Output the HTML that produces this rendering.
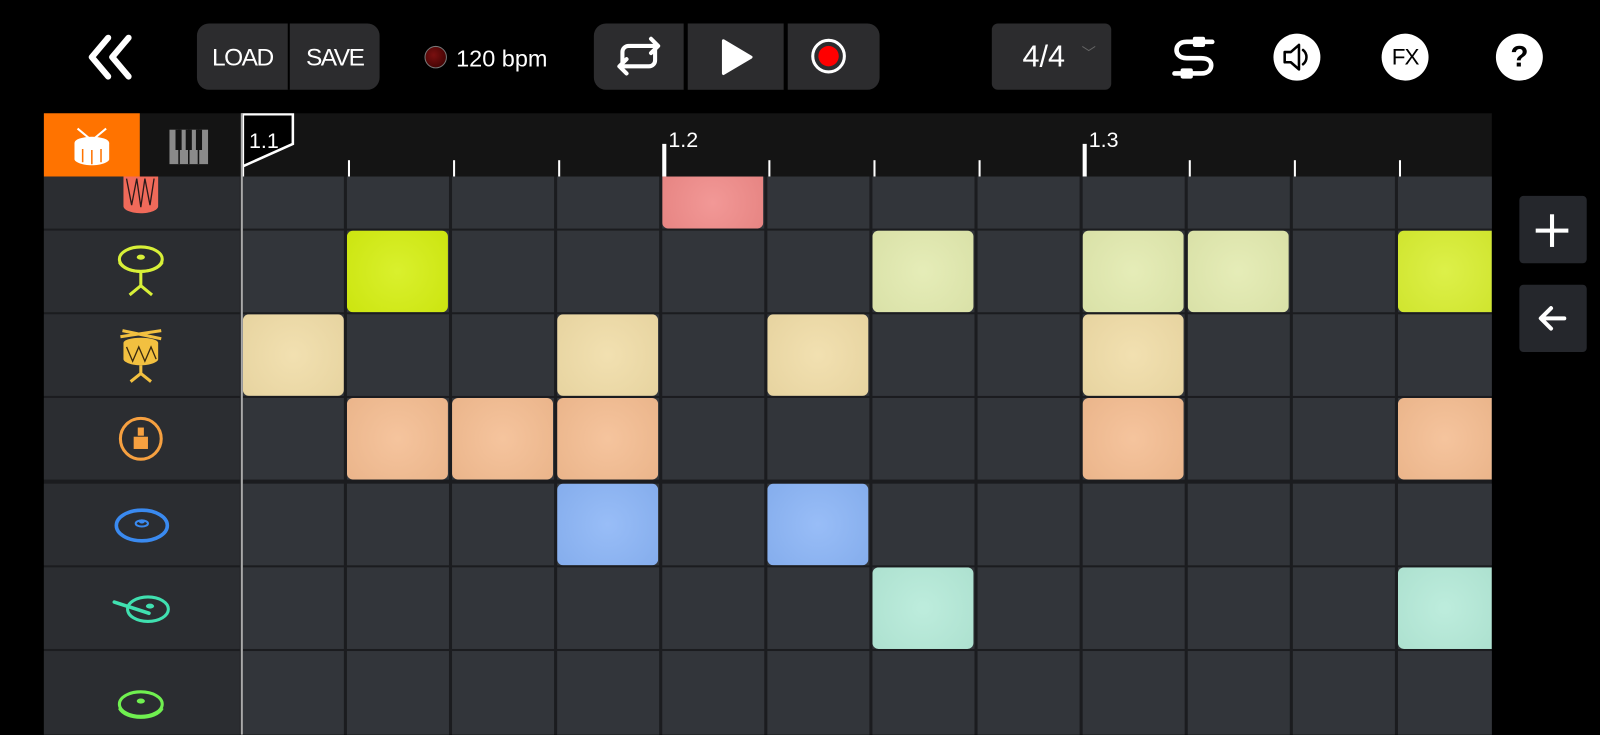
<!DOCTYPE html><html><head><style>
body{margin:0;width:1600px;height:720px;background:#000;position:relative;overflow:hidden;font-family:"Liberation Sans",sans-serif;color:#fff}
#w{position:absolute;left:0;top:0;width:1568px;height:706px;transform:scale(1.0204);transform-origin:0 0}
.a{position:absolute}
.btn{background:#2c2c2e;position:absolute}
.cell{position:absolute;width:99px;border-radius:6px}
</style></head><body><div id="w">
<svg class="a" style="left:84px;top:33px" width="48" height="46" viewBox="0 0 48 46"><path d="M22 4L6 23L22 42M42 4L26 23L42 42" fill="none" stroke="#fff" stroke-width="6" stroke-linecap="round" stroke-linejoin="round"/></svg>
<div class="btn" style="left:193px;top:23px;width:179px;height:65px;border-radius:12px"></div>
<div class="a" style="left:282px;top:23px;width:2px;height:65px;background:#000"></div>
<div class="a" style="left:193px;top:43px;width:89px;text-align:center;font-size:24px;letter-spacing:-1.5px">LOAD</div>
<div class="a" style="left:284px;top:43px;width:88px;text-align:center;font-size:24px;letter-spacing:-1.5px">SAVE</div>
<div class="a" style="left:416px;top:45px;width:22px;height:22px;border-radius:50%;background:radial-gradient(circle at 40% 40%,#7a1010,#300);border:1px solid #777;box-sizing:border-box"></div>
<div class="a" style="left:447px;top:44px;font-size:23px">120 bpm</div>
<div class="btn" style="left:582px;top:23px;width:88px;height:65px;border-radius:12px 0 0 12px"></div>
<div class="btn" style="left:674px;top:23px;width:94px;height:65px"></div>
<div class="btn" style="left:772px;top:23px;width:90px;height:65px;border-radius:0 12px 12px 0"></div>
<svg class="a" style="left:600px;top:35px" width="52" height="40" viewBox="0 0 52 40"><path d="M10 26V16a6 6 0 0 1 6-6h28M38 3l7 7-7 7M42 14v10a6 6 0 0 1-6 6H8M14 37l-7-7 7-7" fill="none" stroke="#fff" stroke-width="4" stroke-linecap="round" stroke-linejoin="round"/></svg>
<svg class="a" style="left:706px;top:38px" width="32" height="36"><path d="M3 2L30 18L3 34Z" fill="#fff" stroke="#fff" stroke-width="3" stroke-linejoin="round"/></svg>
<div class="a" style="left:795px;top:38px;width:34px;height:34px;border:3px solid #fff;border-radius:50%;box-sizing:border-box"></div>
<div class="a" style="left:802px;top:45px;width:20px;height:20px;background:#f00;border-radius:50%"></div>
<div class="btn" style="left:972px;top:23px;width:117px;height:65px;border-radius:6px"></div>
<div class="a" style="left:1002px;top:39px;font-size:30px">4/4</div>
<div class="a" style="left:1060px;top:42px;font-size:14px;color:#666">﹀</div>
<svg class="a" style="left:1145px;top:32px" width="50" height="48" viewBox="0 0 50 48"><path d="M43 9H18C10 9 8 14 8 17s2 8 10 8h14c8 0 10 4 10 7s-2 8-10 8H6" fill="none" stroke="#fff" stroke-width="4.5" stroke-linecap="round"/><rect x="24" y="4" width="12" height="10" rx="2" fill="#fff"/><rect x="12" y="35" width="12" height="10" rx="2" fill="#fff"/></svg>
<div class="a" style="left:1248px;top:33px;width:46px;height:46px;border-radius:50%;background:#fff"></div>
<svg class="a" style="left:1248px;top:33px" width="46" height="46"><path d="M11 18h6l8-7v24l-8-7h-6Z" fill="none" stroke="#000" stroke-width="2.5" stroke-linejoin="round"/><path d="M29 16a9 9 0 0 1 0 14" fill="none" stroke="#000" stroke-width="2.5" stroke-linecap="round"/></svg>
<div class="a" style="left:1354px;top:33px;width:46px;height:46px;border-radius:50%;background:#fff;color:#000;font-size:22px;text-align:center;line-height:46px;letter-spacing:-1px">FX</div>
<div class="a" style="left:1466px;top:33px;width:46px;height:46px;border-radius:50%;background:#fff;color:#000;font-size:29px;font-weight:bold;text-align:center;line-height:46px">?</div>

<div class="a" style="left:43px;top:111px;width:1419px;height:62px;background:#141414"></div>
<div class="a" style="left:43px;top:111px;width:94px;height:62px;background:#ff7300"></div>
<svg class="a" style="left:68px;top:122px" width="44" height="42"><path d="M8 4L20 14M36 4L24 14" stroke="#fff" stroke-width="2"/><ellipse cx="22" cy="18" rx="17" ry="6" fill="#fff"/><path d="M5 18v16c0 3 8 6 17 6s17-3 17-6V18" fill="#fff"/><path d="M13 24v13M22 25v14M31 24v13" stroke="#ff7300" stroke-width="1.5"/></svg>
<svg class="a" style="left:166px;top:127px" width="38" height="34"><rect x="0" y="0" width="38" height="34" fill="#8a8a8a"/><path d="M9.5 0v34M19 0v34M28.5 0v34" stroke="#141414" stroke-width="1.5"/><rect x="6" y="0" width="6" height="20" fill="#141414"/><rect x="16" y="0" width="6" height="20" fill="#141414"/><rect x="26" y="0" width="6" height="20" fill="#141414"/></svg>
<svg class="a" style="left:236px;top:111px" width="54" height="62"><path d="M2 62V1H51V30L2 52" fill="#000" stroke="#fff" stroke-width="2.5"/></svg>
<div class="a" style="left:244px;top:127px;font-size:21px">1.1</div>
<div class="a" style="left:655px;top:126px;font-size:21px">1.2</div>
<div class="a" style="left:1067px;top:126px;font-size:21px">1.3</div>
<div class="a" style="left:649px;top:141px;width:4px;height:32px;background:#fff"></div>
<div class="a" style="left:1061px;top:141px;width:4px;height:32px;background:#fff"></div>
<div id="ticks"></div>

<div class="a" style="left:43px;top:173px;width:1419px;height:547px;background:#1b1c1f"></div>
<div id="grid"></div>
<div class="a" style="left:236px;top:111px;width:2px;height:609px;background:#aaa"></div>

<svg class="a" style="left:118px;top:173px" width="42" height="40"><path d="M3 0v29c0 4 8 7 17 7s17-3 17-7V0Z" fill="#f06a5a"/><path d="M6 2l5 26 5-26 4 28 4-28 5 26 4-26" fill="none" stroke="#2a1a1a" stroke-width="1.3"/></svg>
<svg class="a" style="left:114px;top:240px" width="50" height="56"><ellipse cx="24" cy="14" rx="21" ry="12" fill="none" stroke="#d8f038" stroke-width="3"/><path d="M3 17c3 6 12 9 21 9s18-3 21-9" fill="none" stroke="#d8f038" stroke-width="3"/><ellipse cx="24" cy="12" rx="4" ry="2.5" fill="#d8f038"/><path d="M24 26v14M24 40l-11 9M24 40l11 9" stroke="#d8f038" stroke-width="3"/></svg>
<svg class="a" style="left:114px;top:320px" width="50" height="58"><path d="M4 10l40 -6M6 4l38 8" stroke="#f2c040" stroke-width="3"/><ellipse cx="24" cy="16" rx="17" ry="5" fill="#f2c040"/><path d="M7 16v16c0 3 8 6 17 6s17-3 17-6V16" fill="#f2c040"/><path d="M10 20l6 14 6-14 6 14 6-14 5 12" fill="none" stroke="#3a2a10" stroke-width="1.3"/><path d="M24 38v10M24 46l-10 8M24 46l10 8" stroke="#f2c040" stroke-width="3"/></svg>
<svg class="a" style="left:116px;top:406px" width="46" height="50"><circle cx="22" cy="24" r="20" fill="none" stroke="#f6a040" stroke-width="3"/><rect x="19" y="13" width="6" height="8" fill="#f6a040"/><rect x="15" y="22" width="14" height="12" fill="#f6a040"/></svg>
<svg class="a" style="left:110px;top:496px" width="58" height="40"><ellipse cx="29" cy="19" rx="25" ry="15" fill="none" stroke="#3a8af0" stroke-width="3.5"/><ellipse cx="29" cy="17" rx="6" ry="3" fill="none" stroke="#3a8af0" stroke-width="2"/><ellipse cx="29" cy="15" rx="3" ry="2" fill="#3a8af0"/></svg>
<svg class="a" style="left:108px;top:580px" width="62" height="36"><ellipse cx="37" cy="17" rx="20" ry="12" fill="none" stroke="#40e0b0" stroke-width="3"/><ellipse cx="39" cy="14" rx="4" ry="2.5" fill="#40e0b0"/><path d="M4 10l34 11" stroke="#40e0b0" stroke-width="3.5" stroke-linecap="round"/></svg>
<svg class="a" style="left:114px;top:674px" width="50" height="36"><ellipse cx="24" cy="16" rx="21" ry="12" fill="none" stroke="#70f050" stroke-width="3"/><path d="M3 20c3 6 12 9 21 9s18-3 21-9" fill="none" stroke="#70f050" stroke-width="3"/><ellipse cx="24" cy="13" rx="4" ry="2.5" fill="#70f050"/></svg>

<div class="btn" style="left:1489px;top:192px;width:66px;height:66px;border-radius:4px;background:#25272c"></div>
<div class="a" style="left:1505px;top:224px;width:32px;height:4px;background:#fff"></div>
<div class="a" style="left:1519px;top:210px;width:4px;height:32px;background:#fff"></div>
<div class="btn" style="left:1489px;top:279px;width:66px;height:66px;border-radius:4px;background:#25272c"></div>
<svg class="a" style="left:1505px;top:298px" width="34" height="28"><path d="M28 14H6M15 4L5 14l10 10" fill="none" stroke="#fff" stroke-width="4" stroke-linecap="round" stroke-linejoin="round"/></svg>
</div>
<script>
var xs=[237,339,442,545,648,751,854,957,1060,1163,1266,1369,1462];
var t='';
for(var i=1;i<12;i++){if(i==4||i==8)continue;t+='<div class="a" style="left:'+(xs[i]+2)+'px;top:157px;width:2px;height:16px;background:#fff"></div>';}
document.getElementById('ticks').innerHTML=t;
var rows=[[173,51],[226,80],[308,80],[390,80],[474,80],[556,80],[638,82]];
var h='';
rows.forEach(function(r){h+='<div class="a" style="left:43px;top:'+r[0]+'px;width:192px;height:'+r[1]+'px;background:#2b2d31"></div>';
for(var i=0;i<12;i++){var w=xs[i+1]-xs[i]-3;if(i==11)w=xs[12]-xs[11]-1;h+='<div class="a" style="left:'+(xs[i]+1)+'px;top:'+r[0]+'px;width:'+w+'px;height:'+r[1]+'px;background:#32353a"></div>';}});
var on={0:{4:'#f08a88'},1:{1:'#d4ee10',6:'#e2eaae',8:'#e2eaae',9:'#e2eaae',11:'#d8ee30'},2:{0:'#f0dca6',3:'#f0dca6',5:'#f0dca6',8:'#f0dca6'},3:{1:'#f4bc90',2:'#f4bc90',3:'#f4bc90',8:'#f4bc90',11:'#f4bc90'},4:{3:'#8ab4f6',5:'#8ab4f6'},5:{6:'#b4ead8',11:'#b4ead8'}};
for(var r in on)for(var c in on[r]){var R=rows[r],col=on[r][c];var w=(c==11)?92:99;
h+='<div class="cell" style="left:'+(xs[c]+1)+'px;top:'+R[0]+'px;height:'+R[1]+'px;width:'+w+'px;background:radial-gradient(circle,rgba(255,255,255,.12),rgba(0,0,0,.04)),'+col+';'+(c==11?'border-radius:6px 0 0 6px;':'')+(r==0?'border-radius:0 0 6px 6px;':'')+'"></div>';}
document.getElementById('grid').innerHTML=h;
</script>
</body></html>
